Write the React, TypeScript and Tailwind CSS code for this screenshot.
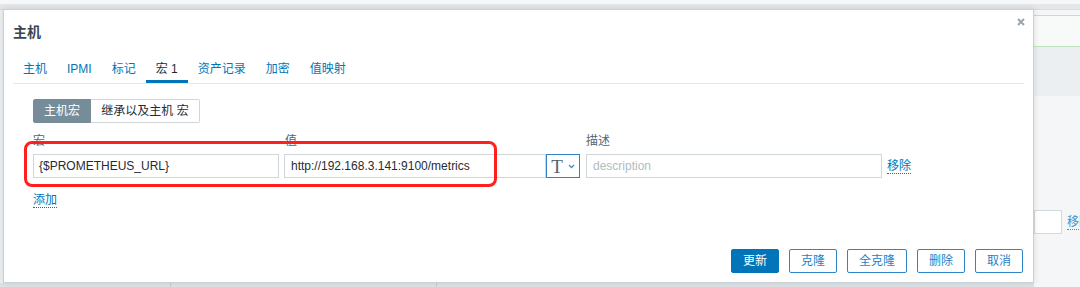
import React from "react"

const tabs = ["主机", "IPMI", "标记", "宏 1", "资产记录", "加密", "值映射"]
const actions = ["更新", "克隆", "全克隆", "删除", "取消"]

function TypeButton() {
  return (
    <button className="flex items-center justify-center gap-[5px] w-[34px] h-[24px] border border-[#2f86c6] bg-white">
      <span className="font-['Liberation_Serif',serif] text-[19px] leading-none text-[#52636c]">T</span>
      <svg width="7" height="5" viewBox="0 0 7 5" className="mt-[1px]">
        <path d="M1 1l2.5 2.5L6 1" fill="none" stroke="#3b8fd0" strokeWidth="1.3" />
      </svg>
    </button>
  )
}

export default function App() {
  return (
    <div className="relative w-[1080px] h-[287px] overflow-hidden bg-[#eef1f3] text-[12px] text-[#1f2c33] font-['Liberation_Sans','Noto_Sans_CJK_SC',sans-serif]">
      {/* page behind the dialog */}
      <div className="h-[4px] bg-[#f6f7f8]" />
      <div className="h-[6px] bg-[#e3e7ea] border-b border-[#d5dbdf]" />
      <div className="flex h-[277px]">
        <div className="w-[1034px] shrink-0 flex flex-col">
          <div className="flex-1" />
          <div className="flex h-[4px] bg-[#dde3e6]">
            <div className="w-[171px] border-r border-[#c4cdd2]" />
            <div className="w-[266px] border-r border-[#c4cdd2]" />
          </div>
        </div>
        <div className="flex-1 min-w-0 overflow-hidden flex flex-col">
          <div className="h-[5px] bg-[#f4f6f7]" />
          <div className="h-[32px] border-y border-[#bfe2bf] bg-[#f8faf9]" />
          <div className="h-[49px] bg-[#eceff1]" />
          <div className="flex-1 bg-[#f5f6f7] pt-[114px]">
            <div className="flex items-center whitespace-nowrap">
              <div className="w-[28px] h-[24px] shrink-0 border border-[#d3dadd] bg-white" />
              <span className="ml-[5px] text-[#3e8fcf] border-b border-dotted border-[#3e8fcf] leading-[14px]">移除</span>
            </div>
          </div>
        </div>
      </div>

      {/* dialog */}
      <div className="absolute left-[3px] top-[9px] w-[1031px] h-[274px] flex flex-col bg-white border border-[#c9d1d5] shadow-[0_0_6px_rgba(0,0,0,0.12)]">
        <button className="absolute right-[8px] top-[8px]" aria-label="close">
          <svg width="8" height="8" viewBox="0 0 8 8">
            <path d="M1 1l6 6M7 1L1 7" stroke="#9aa6ac" strokeWidth="2" />
          </svg>
        </button>

        <div className="h-[44px] pl-[9px] pt-[13px]">
          <h2 className="text-[14px] leading-[18px] font-bold text-[#3a474e]">主机</h2>
        </div>

        <div className="mx-[9px] flex border-b border-[#e4e8ea]">
          {tabs.map((t) => (
            <div
              key={t}
              className={
                t === "宏 1"
                  ? "h-[29px] px-[10px] flex items-center text-[#1f2c33] border-b-[3px] border-[#0275b8] mb-[-1px] pt-[3px]"
                  : "h-[29px] px-[10px] flex items-center text-[#0275b8]"
              }
            >
              {t}
            </div>
          ))}
        </div>

        <div className="flex-1 pl-[29px] pt-[15px]">
          <div className="flex h-[24px]">
            <div className="w-[58px] flex items-center justify-center bg-[#768d99] text-white rounded-l-[2px] border border-[#768d99]">
              主机宏
            </div>
            <div className="w-[109px] flex items-center justify-center bg-white border border-l-0 border-[#cfd7db] rounded-r-[2px]">
              继承以及主机 宏
            </div>
          </div>

          <div className="flex mt-[11px] leading-[14px] text-[#56666e]">
            <div className="w-[251px]">宏</div>
            <div className="w-[302px] pl-[1px]">值</div>
            <div>描述</div>
          </div>

          <div className="flex items-center mt-[6px]">
            <div className="w-[246px] h-[24px] border border-[#cfd7db] px-[5px] flex items-center">
              {"{$PROMETHEUS_URL}"}
            </div>
            <div className="ml-[5px] w-[262px] h-[24px] border border-[#cfd7db] px-[6px] flex items-center">
              http://192.168.3.141:9100/metrics
            </div>
            <TypeButton />
            <div className="ml-[6px] w-[296px] h-[24px] border border-[#cfd7db] px-[6px] flex items-center text-[#aebcc3]">
              description
            </div>
            <span className="ml-[5px] text-[#0275b8] border-b border-dotted border-[#0275b8] leading-[14px]">移除</span>
          </div>

          <div className="mt-[13px]">
            <span className="text-[#0275b8] border-b border-dotted border-[#0275b8] leading-[14px]">添加</span>
          </div>
        </div>

        <div className="flex justify-end gap-[10px] pr-[10px] pb-[9px]">
          {actions.map((a) => (
            <button
              key={a}
              className={
                a === "更新"
                  ? "h-[24px] px-[11px] border border-[#0275b8] bg-[#0275b8] text-white rounded-[2px]"
                  : "h-[24px] px-[11px] border border-[#2f86c6] bg-white text-[#1f7fc4] rounded-[2px]"
              }
            >
              {a}
            </button>
          ))}
        </div>
      </div>

      {/* red highlight annotation */}
      <div className="absolute left-[24px] top-[141px] w-[473px] h-[46px] border-[3px] border-[#ff1f1f] rounded-[8px]" />
    </div>
  )
}
